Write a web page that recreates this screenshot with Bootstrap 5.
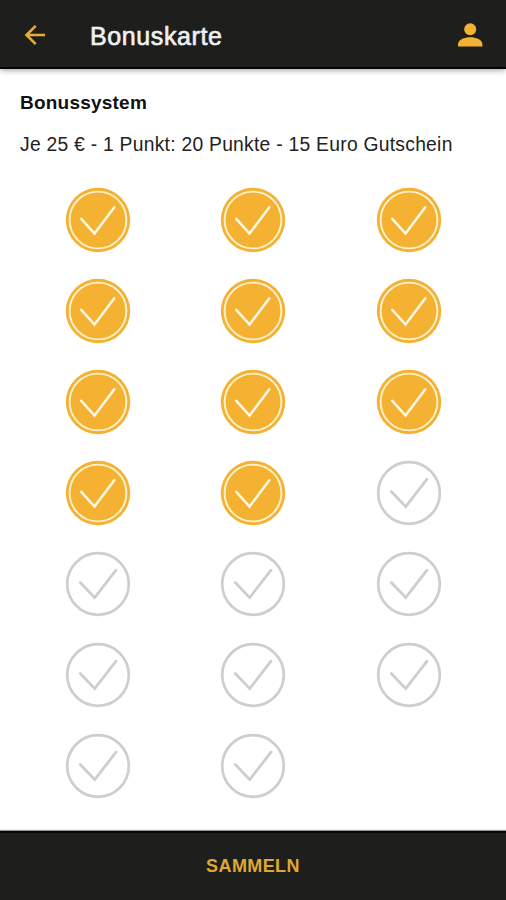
<!DOCTYPE html>
<html lang="de">
<head>
<meta charset="utf-8">
<meta name="viewport" content="width=device-width, initial-scale=1">
<title>Bonuskarte</title>
<link href="https://cdn.jsdelivr.net/npm/bootstrap@5.3.0/dist/css/bootstrap.min.css" rel="stylesheet">
<style>
body{font-family:"Liberation Sans",Arial,sans-serif;height:900px;overflow:hidden;background:#fff;color:#111}
svg{display:block;fill:none}
.profile-icon{fill:#f5b131}
.app-bar{height:69px;background:#1e1f1c;border-bottom:2px solid #050505;box-shadow:0 1px 6px rgba(0,0,0,.4);padding:2px 23px 0 21px}
.app-title{font-size:25px;line-height:30px;letter-spacing:.6px;color:#f0f0f0;-webkit-text-stroke:.65px #f0f0f0;margin:3px 0 0 41px}
.content{padding:22px 19.5px 0 20px}
.heading{font-size:19px;line-height:24px;font-weight:700;margin:0;letter-spacing:.22px;color:#111}
.terms{font-size:19.3px;line-height:24px;margin:18px 0 0;letter-spacing:.26px;white-space:nowrap;color:#222}
.stamps{margin-top:29.5px}
.stamp{height:91.15px}
.action-bar{height:69px;background:#1e1f1c;border:0;border-top:2px solid #050505;border-radius:0;box-shadow:0 -1px 1px rgba(0,0,0,.4);color:#dfa733;font-size:18px;font-weight:700;letter-spacing:.4px}
</style>
<script src="https://cdn.jsdelivr.net/npm/bootstrap@5.3.0/dist/js/bootstrap.bundle.min.js"></script>
</head>
<body class="d-flex flex-column m-0">
<svg class="d-none">
  <symbol id="full" viewBox="-33 -33 66 66">
    <circle r="32.2" fill="#f5b131"/>
    <circle r="28.4" stroke="#fff2cf" stroke-width="1.9"/>
    <path d="M-16.7-1.2-3.5 13.6 16.3-12.8" stroke="#fff8e4" stroke-width="2.5" stroke-linecap="round"/>
  </symbol>
  <symbol id="open" viewBox="-33 -33 66 66">
    <circle r="30.8" stroke="#cecece" stroke-width="2.7"/>
    <path d="M-17.7-1.5-3.3 13.6 18-13.8" stroke="#cecece" stroke-width="2.8" stroke-linecap="round"/>
  </symbol>
</svg>
<header class="app-bar d-flex align-items-center flex-shrink-0">
  <svg width="28" height="28" viewBox="0 0 28 28" stroke="#e9ac30" stroke-width="2.6"><path d="M24 14H6M14.7 4.8 5.5 14l9.2 9.2"/></svg>
  <h1 class="app-title">Bonuskarte</h1>
  <svg class="profile-icon ms-auto" width="26" height="26" viewBox="0 0 26 26"><circle cx="13.2" cy="7.3" r="6"/><path d="M1 24.5v-2.2c0-4.5 6.5-7 12.2-7s12.2 2.5 12.2 7v2.2z"/></svg>
</header>
<main class="content flex-grow-1">
  <h2 class="heading">Bonussystem</h2>
  <p class="terms">Je 25 € - 1 Punkt: 20 Punkte - 15 Euro Gutschein</p>
  <div class="stamps row row-cols-3 g-0" id="stamps"></div>
</main>
<button type="button" class="action-bar w-100 flex-shrink-0">SAMMELN</button>
<script>
const earned = 11, total = 20;
document.getElementById('stamps').innerHTML = Array.from({length: total}, (_, i) =>
  `<div class="col stamp d-flex justify-content-center align-items-start"><svg width="66" height="66"><use href="#${i < earned ? 'full' : 'open'}"/></svg></div>`).join('');
</script>
</body>
</html>
